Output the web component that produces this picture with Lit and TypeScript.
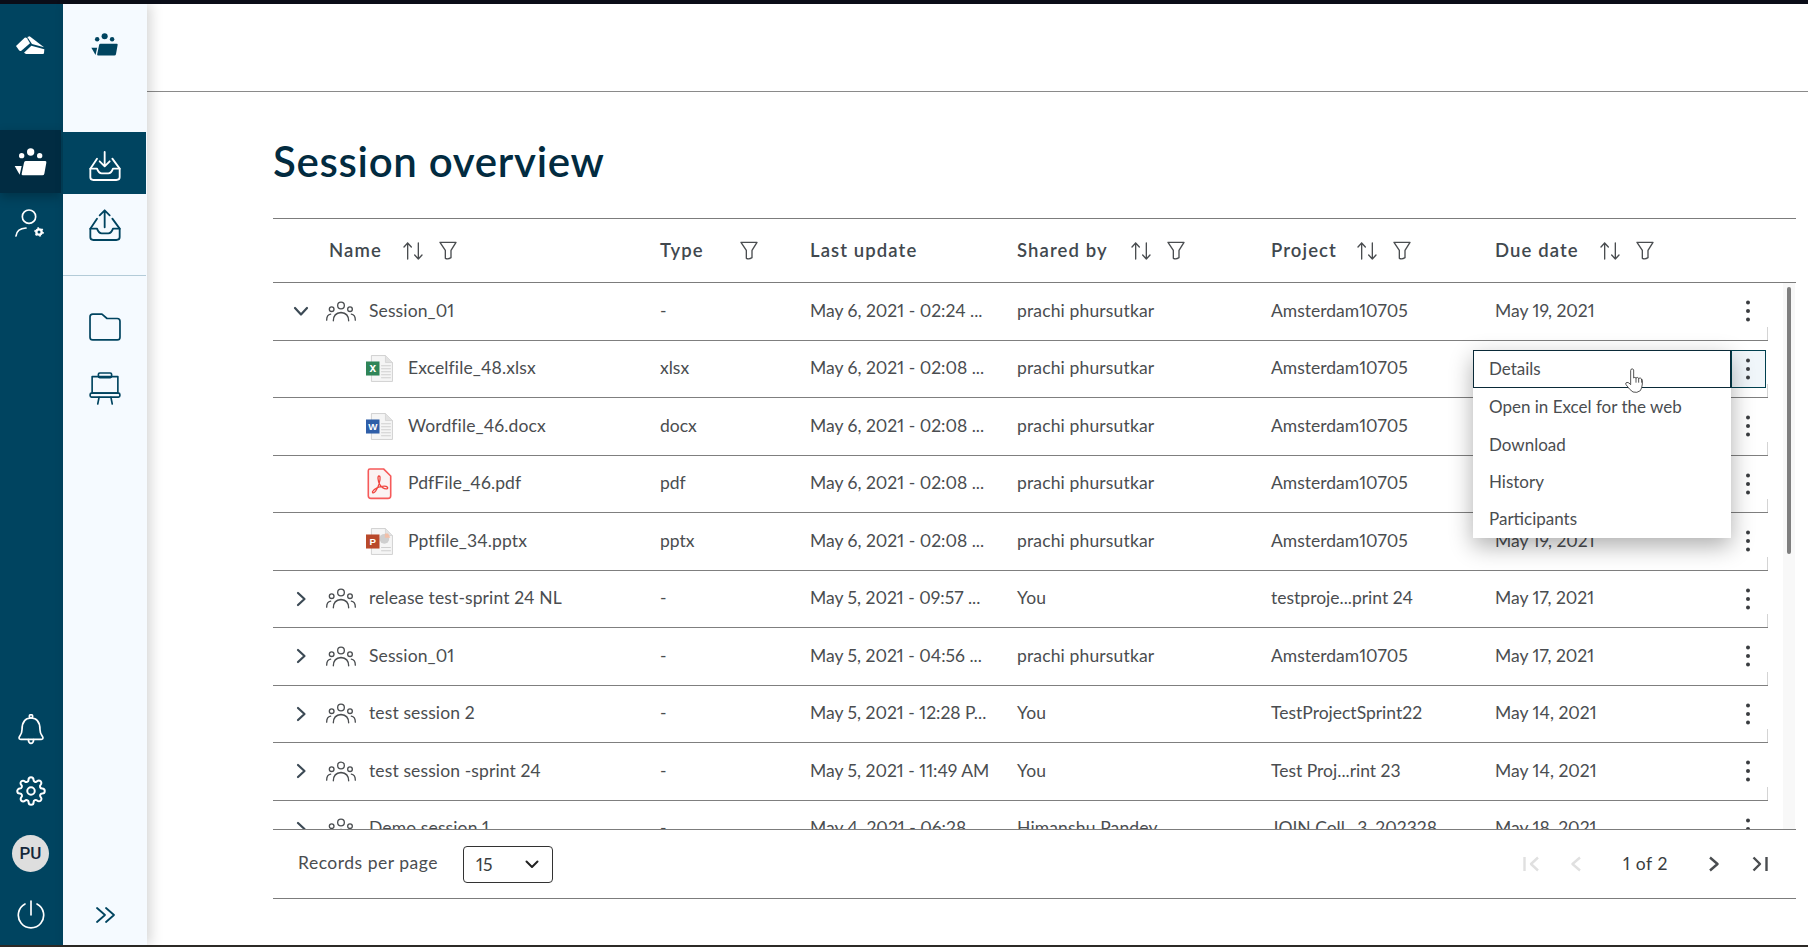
import { LitElement, html, svg, css } from 'lit';
import { customElement } from 'lit/decorators.js';

const teamIcon = (w: number, h: number) => html`<svg class="team" width=${w} height=${h} viewBox="0 0 105 90" fill="currentColor">
  <circle cx="53" cy="15" r="11"/><circle cx="26" cy="26" r="8"/><circle cx="80" cy="26" r="8"/>
  <path d="M5 57H26L20 83Z"/>
  <path d="M38 42H97Q101 42 100 47L94 80Q93 85 88 85H30Q25 85 26 80L33 47Q34 42 38 42Z"/>
</svg>`;

const inboxIcon = (up: boolean) => html`<svg width="36" height="35" viewBox="0 0 108 105" fill="none" stroke="currentColor" stroke-width="5.5" stroke-linecap="round" stroke-linejoin="round">
  ${up
    ? svg`<path d="M53 58V8M38 22L53 7L68 22"/>`
    : svg`<path d="M53 12V53M38 40L53 55L68 40"/>`}
  <path d="M30 32L10 62V88Q10 96 19 96H88Q98 96 98 88V62L76 32"/>
  <path d="M10 62H30Q35 76 44 76H64Q73 76 78 62H98"/>
</svg>`;

const chevron = (dir: 'down' | 'right') => html`<svg class="chev" width="18" height="18" viewBox="0 0 18 18" fill="none" stroke="currentColor" stroke-width="2.2" stroke-linecap="round" stroke-linejoin="round">
  ${dir === 'down' ? svg`<path d="M3 6L9 12.5L15 6"/>` : svg`<path d="M6 3L12.5 9L6 15"/>`}
</svg>`;

const groupIcon = () => html`<svg class="group" width="30" height="21" viewBox="0 0 90 62" fill="none" stroke="currentColor" stroke-width="4" stroke-linecap="round">
  <circle cx="45" cy="13" r="10"/><circle cx="17" cy="24" r="7"/><circle cx="72" cy="24" r="7"/>
  <path d="M22 59Q22 36 45 34Q68 36 68 59"/>
  <path d="M2 57Q2 41 14 39"/><path d="M88 57Q88 41 76 39"/>
</svg>`;

const sortIcon = () => html`<svg width="20" height="18" viewBox="0 0 60 54" fill="none" stroke="currentColor" stroke-width="4" stroke-linecap="round" stroke-linejoin="round">
  <path d="M14 51V3M3 15L14 3L25 15"/><path d="M46 3V51M35 39L46 51L57 39"/>
</svg>`;

const filterIcon = () => html`<svg width="18" height="19" viewBox="0 0 54 57" fill="none" stroke="currentColor" stroke-width="4" stroke-linejoin="round">
  <path d="M3 4H51L36 28V50Q27 56 19 52V28Z"/>
</svg>`;

const kebab = () => html`<svg width="6" height="22" viewBox="0 0 6 22" fill="currentColor">
  <circle cx="3" cy="2.5" r="2"/><circle cx="3" cy="11" r="2"/><circle cx="3" cy="19.5" r="2"/>
</svg>`;

const page = () => svg`<path d="M10 1H36L49 14V49H10Z" fill="#f5f5f5" stroke="#c8c8c8" stroke-width="1.5"/><path d="M36 1V14H49" fill="#e2e2e2" stroke="#c8c8c8" stroke-width="1"/>`;
const lines = () => svg`<path d="M28 20H46M28 25.500H46M28 31H46M28 36.500H46M28 42H46" stroke="#cfcfcf" stroke-width="2"/>`;

const fileIcon = (type: string) => {
  if (type === 'pdf') {
    return html`<svg width="27" height="32" viewBox="0 0 50 60" fill="none">
      <path d="M7 2H33L46 15V52Q46 57 41 57H9Q4 57 4 52V5Q4 2 7 2Z" fill="#fbf3f3" stroke="#f65a5a" stroke-width="3"/>
      <path d="M24 15C21 15 22 24 25 30C27 35 34 40 39 39C42 38 40 34 34 34C26 34 15 38 12 44C11 48 15 47 18 43C22 38 27 24 26 17C26 15 25 15 24 15Z" stroke="#f0453f" stroke-width="2.4"/>
    </svg>`;
  }
  const badge = type === 'xlsx' ? ['#2f8558', 'x'] : type === 'docx' ? ['#2f5ea8', 'W'] : ['#b9492b', 'P'];
  return html`<svg width="27" height="27" viewBox="0 0 50 50">
    ${page()}
    ${type === 'pptx'
      ? svg`<circle cx="34" cy="20" r="9" fill="#cfcfcf"/><path d="M35 10H41L45 18H35Z" fill="#f2bfa8"/><path d="M28 36H46M28 42H46" stroke="#cfcfcf" stroke-width="2"/>`
      : lines()}
    <rect x="0" y="12" width="25" height="26" fill=${badge[0]}/>
    <text x="12.500" y="31" text-anchor="middle" font-family="Liberation Sans, sans-serif" font-weight="700" font-size=${type === 'xlsx' ? 22 : 18} fill="#fff">${badge[1]}</text>
  </svg>`;
};

type Row = {
  name: string;
  type: string;
  updated: string;
  by: string;
  project: string;
  due: string;
  file?: boolean;
  open?: boolean;
};

const rows: Row[] = [
  { name: 'Session_01', type: '-', updated: 'May 6, 2021 - 02:24 ...', by: 'prachi phursutkar', project: 'Amsterdam10705', due: 'May 19, 2021', open: true },
  { name: 'Excelfile_48.xlsx', type: 'xlsx', updated: 'May 6, 2021 - 02:08 ...', by: 'prachi phursutkar', project: 'Amsterdam10705', due: 'May 19, 2021', file: true },
  { name: 'Wordfile_46.docx', type: 'docx', updated: 'May 6, 2021 - 02:08 ...', by: 'prachi phursutkar', project: 'Amsterdam10705', due: 'May 19, 2021', file: true },
  { name: 'PdfFile_46.pdf', type: 'pdf', updated: 'May 6, 2021 - 02:08 ...', by: 'prachi phursutkar', project: 'Amsterdam10705', due: 'May 19, 2021', file: true },
  { name: 'Pptfile_34.pptx', type: 'pptx', updated: 'May 6, 2021 - 02:08 ...', by: 'prachi phursutkar', project: 'Amsterdam10705', due: 'May 19, 2021', file: true },
  { name: 'release test-sprint 24 NL', type: '-', updated: 'May 5, 2021 - 09:57 ...', by: 'You', project: 'testproje...print 24', due: 'May 17, 2021' },
  { name: 'Session_01', type: '-', updated: 'May 5, 2021 - 04:56 ...', by: 'prachi phursutkar', project: 'Amsterdam10705', due: 'May 17, 2021' },
  { name: 'test session 2', type: '-', updated: 'May 5, 2021 - 12:28 P...', by: 'You', project: 'TestProjectSprint22', due: 'May 14, 2021' },
  { name: 'test session -sprint 24', type: '-', updated: 'May 5, 2021 - 11:49 AM', by: 'You', project: 'Test Proj...rint 23', due: 'May 14, 2021' },
  { name: 'Demo session 1', type: '-', updated: 'May 4, 2021 - 06:28 ...', by: 'Himanshu Pandey', project: 'JOIN Coll...3_202328', due: 'May 18, 2021' },
];

// label box width decides where the sort / filter icons start
const columns = [
  { label: 'Name', width: 74, sort: true, filter: true, cls: 'name' },
  { label: 'Type', width: 80, sort: false, filter: true, cls: '' },
  { label: 'Last update', width: 120, sort: false, filter: false, cls: '' },
  { label: 'Shared by', width: 114, sort: true, filter: true, cls: '' },
  { label: 'Project', width: 86, sort: true, filter: true, cls: '' },
  { label: 'Due date', width: 105, sort: true, filter: true, cls: '' },
];

@customElement('app-root')
export class AppRoot extends LitElement {
  static styles = css`
    :host {
      display: flex;
      flex-direction: column;
      height: 100vh;
      overflow: hidden;
      position: relative;
      background: #fff;
      font-family: Lato, 'Noto Sans', sans-serif;
      font-size: 17.5px;
      font-feature-settings: 'pnum';
      color: #4a4d50;
    }
    .topbar { height: 4px; background: #0a0d18; flex: none; }
    .bottombar { height: 2px; background: #2c2a26; flex: none; }
    .frame { flex: 1; display: flex; min-height: 0; }

    .rail {
      width: 63px;
      flex: none;
      background: #004460;
      color: #fff;
      display: flex;
      flex-direction: column;
    }
    .rail-item {
      width: 61px;
      height: 62px;
      display: flex;
      align-items: center;
      justify-content: center;
      flex: none;
    }
    .rail-logo { height: 82px; margin-bottom: 44px; }
    .rail-item.active { background: #012c42; box-shadow: 0 4px 10px rgba(0, 0, 0, 0.25); height: 63px; }
    .rail-bottom { margin-top: auto; }
    .rail-item.last { height: 61px; }
    .avatar {
      width: 37px;
      height: 37px;
      border-radius: 50%;
      background: #dedede;
      color: #14263a;
      font-family: Roboto, sans-serif;
      font-size: 17px;
      font-weight: 500;
      display: flex;
      align-items: center;
      justify-content: center;
    }

    .subnav {
      width: 84px;
      flex: none;
      background: #f5faff;
      color: #004460;
      display: flex;
      flex-direction: column;
      position: relative;
      box-shadow: 4px 0 12px rgba(0, 0, 0, 0.16);
      z-index: 1;
    }
    .sub-item {
      width: 83px;
      height: 62px;
      flex: none;
      display: flex;
      align-items: center;
      justify-content: center;
    }
    .sub-top { height: 80px; margin-bottom: 48px; }
    .sub-item.active { background: #004460; color: #fff; }
    .sub-item.active svg { margin-top: 4px; }
    .divider { height: 1px; width: 83px; background: #b3cbd8; margin: 19px 0 21px; flex: none; }
    .sub-tight { height: 59px; }
    .sub-board { height: 65px; }
    .expand { margin-top: auto; height: 60px; padding-left: 3px; box-sizing: border-box; }

    .main { flex: 1; min-width: 0; display: flex; flex-direction: column; }
    .header { height: 88px; box-sizing: border-box; flex: none; border-bottom: 1px solid #8a8a8a; }
    .content { flex: 1; display: flex; flex-direction: column; padding: 0 12px 0 126px; min-height: 0; }
    h1 {
      margin: 0;
      height: 126px;
      flex: none;
      display: flex;
      align-items: center;
      padding-top: 12px;
      box-sizing: border-box;
      font-size: 42px;
      font-weight: 600;
      letter-spacing: 0.7px;
      color: #022b40;
    }

    .head, .row {
      display: grid;
      grid-template-columns: 387px 150px 207px 254px 224px 235px 38px;
      align-items: center;
    }
    .head {
      height: 65px;
      box-sizing: border-box;
      border-top: 1px solid #7c7c7c;
      border-bottom: 1px solid #7c7c7c;
      font-size: 18.5px;
      font-weight: 600;
      letter-spacing: 1.1px;
      color: #41484e;
      flex: none;
    }
    .hcell { display: flex; align-items: center; }
    .hcell.name { padding-left: 56px; }
    .hcell svg { flex: none; color: #4a4d50; display: block; }
    .hlabel { flex: none; padding-bottom: 2px; }
    .gap-b { margin-left: 16px; }

    .body { height: 546px; flex: none; display: flex; overflow: hidden; }
    .rows { width: 1495px; flex: none; }
    .row {
      height: 57.5px;
      box-sizing: border-box;
      border-bottom: 1px solid #7f7f7f;
      background: linear-gradient(#d4d4d4, #d4d4d4) right bottom / 1px 13px no-repeat;
    }
    .cell { padding-bottom: 2px; }
    .cell.by { letter-spacing: 0.15px; }
    .name-cell { display: flex; align-items: center; }
    .name-cell span { padding-bottom: 2px; letter-spacing: 0.12px; }
    .name-cell .chev { margin-left: 19px; color: #3c4a55; flex: none; }
    .name-cell .group { margin-left: 16px; margin-right: 13px; color: #4a4d50; flex: none; }
    .name-cell.file { padding-left: 93px; }
    .name-cell.file svg { margin-right: 15px; flex: none; }
    .actions { display: flex; justify-content: center; padding-right: 2px; color: #3a3d40; }
    .actions.active span {
      width: 35px;
      height: 38px;
      box-sizing: border-box;
      border: 1px solid #00404f;
      background: #f0f6fa;
      align-items: center;
      justify-content: center;
    }
    .actions span { display: flex; }
    .track { width: 12px; margin-left: 15px; background: #f8f8f8; flex: none; padding: 4px 4px 0; box-sizing: border-box; }
    .thumb { height: 267px; background: #7f7f7f; border-radius: 2px; }

    .footer {
      height: 70px;
      box-sizing: border-box;
      flex: none;
      border-top: 1px solid #7c7c7c;
      border-bottom: 1px solid #7c7c7c;
      display: flex;
      align-items: center;
      padding: 0 28px 0 25px;
    }
    .per-page { width: 140px; flex: none; letter-spacing: 0.5px; padding-bottom: 4px; }
    .select {
      width: 90px;
      height: 37px;
      box-sizing: border-box;
      border: 1px solid #333;
      border-radius: 4px;
      margin-left: 25px;
      padding: 0 13px 0 12px;
      display: flex;
      align-items: center;
      justify-content: space-between;
      color: #3a3d40;
    }
    .select svg { color: #222; }
    .pager { margin-left: auto; display: flex; align-items: center; color: #4a4d50; }
    .pager svg { display: block; flex: none; }
    .off { color: #e0e0e0; }
    .pager .count { margin: 0 41px 0 42px; color: #3a3d40; letter-spacing: 0.6px; padding-bottom: 2px; }
    .pager .p2 { margin-left: 31px; }
    .pager .p3 { margin-left: 33px; }

    .menu {
      position: absolute;
      left: 1473px;
      top: 350px;
      width: 258px;
      height: 188px;
      background: #fff;
      box-shadow: 0 8px 22px rgba(0, 0, 0, 0.32);
      font-size: 17px;
      z-index: 2;
    }
    .menu div {
      height: 37.4px;
      box-sizing: border-box;
      display: flex;
      align-items: center;
      padding: 0 0 0 16px;
    }
    .menu .current { height: 38px; border: 1px solid #0a2a38; padding: 0 0 2px 15px; }
    .hand { position: absolute; left: 1625px; top: 368px; z-index: 3; }
  `;

  private renderRow(r: Row, i: number) {
    return html`<div class="row">
      ${r.file
        ? html`<div class="name-cell file">${fileIcon(r.type)}<span>${r.name}</span></div>`
        : html`<div class="name-cell">${chevron(r.open ? 'down' : 'right')}${groupIcon()}<span>${r.name}</span></div>`}
      <div class="cell">${r.type}</div>
      <div class="cell">${r.updated}</div>
      <div class="cell by">${r.by}</div>
      <div class="cell">${r.project}</div>
      <div class="cell">${r.due}</div>
      <div class="actions ${i === 1 ? 'active' : ''}"><span>${kebab()}</span></div>
    </div>`;
  }

  render() {
    return html`
      <div class="topbar"></div>
      <div class="frame">
        <nav class="rail">
          <div class="rail-item rail-logo">
            <svg width="29" height="18" viewBox="0 0 87 54" fill="#fff">
              <path d="M0 30L26 5Q30 3 33 7L42 22L16 44Q12 46 9 43Z"/>
              <path d="M34 3L41 1L84 34L48 24Z"/>
              <path d="M24 50L46 29L85 40L84 52Q84 54 80 54H30Z"/>
            </svg>
          </div>
          <div class="rail-item active">${teamIcon(35, 30)}</div>
          <div class="rail-item">
            <svg width="31" height="31" viewBox="0 0 93 93" fill="none" stroke="#fff" stroke-width="5" stroke-linecap="round">
              <circle cx="42" cy="23" r="20"/>
              <path d="M3 81Q5 59 33 57"/>
              <circle cx="72" cy="69" r="8" stroke-width="7"/>
              <circle cx="72" cy="69" r="12" stroke-width="5" stroke-linecap="butt" stroke-dasharray="5 7.57"/>
            </svg>
          </div>
          <div class="rail-bottom">
            <div class="rail-item">
              <svg width="26" height="31" viewBox="0 0 78 93" fill="none" stroke="#fff" stroke-width="5" stroke-linecap="round" stroke-linejoin="round">
                <path d="M39 12C17 12 12 32 12 47C12 62 3 66 3 72Q3 76 8 76H70Q75 76 75 72C75 66 66 62 66 47C66 32 61 12 39 12Z"/>
                <circle cx="39" cy="7" r="5"/>
                <path d="M31 77Q32 88 39 88Q46 88 47 77"/>
              </svg>
            </div>
            <div class="rail-item">
              <svg width="30" height="30" viewBox="0 0 24 24" fill="none" stroke="#fff" stroke-width="1.6" stroke-linecap="round" stroke-linejoin="round">
                <circle cx="12" cy="12" r="3"/>
                <path d="M19.4 15a1.65 1.65 0 0 0 .33 1.82l.06.06a2 2 0 0 1 0 2.83 2 2 0 0 1-2.83 0l-.06-.06a1.65 1.65 0 0 0-1.82-.33 1.65 1.65 0 0 0-1 1.51V21a2 2 0 0 1-2 2 2 2 0 0 1-2-2v-.09A1.65 1.65 0 0 0 9 19.4a1.65 1.65 0 0 0-1.82.33l-.06.06a2 2 0 0 1-2.83 0 2 2 0 0 1 0-2.83l.06-.06a1.65 1.65 0 0 0 .33-1.82 1.65 1.65 0 0 0-1.51-1H3a2 2 0 0 1-2-2 2 2 0 0 1 2-2h.09A1.65 1.65 0 0 0 4.6 9a1.65 1.65 0 0 0-.33-1.82l-.06-.06a2 2 0 0 1 0-2.83 2 2 0 0 1 2.83 0l.06.06a1.65 1.65 0 0 0 1.82.33H9a1.65 1.65 0 0 0 1-1.51V3a2 2 0 0 1 2-2 2 2 0 0 1 2 2v.09a1.65 1.65 0 0 0 1 1.51 1.65 1.65 0 0 0 1.82-.33l.06-.06a2 2 0 0 1 2.83 0 2 2 0 0 1 0 2.83l-.06.06a1.65 1.65 0 0 0-.33 1.82V9a1.65 1.65 0 0 0 1.51 1H21a2 2 0 0 1 2 2 2 2 0 0 1-2 2h-.09a1.65 1.65 0 0 0-1.51 1z"/>
              </svg>
            </div>
            <div class="rail-item"><div class="avatar">PU</div></div>
            <div class="rail-item last">
              <svg width="28" height="29" viewBox="0 0 84 87" fill="none" stroke="#fff" stroke-width="5" stroke-linecap="round">
                <path d="M42 3V45"/>
                <path d="M24 12A38 38 0 1 0 60 12"/>
              </svg>
            </div>
          </div>
        </nav>
        <nav class="subnav">
          <div class="sub-item sub-top">${teamIcon(29, 25)}</div>
          <div class="sub-item active">${inboxIcon(false)}</div>
          <div class="sub-item">${inboxIcon(true)}</div>
          <div class="divider"></div>
          <div class="sub-item sub-tight">
            <svg width="32" height="28" viewBox="0 0 94 82" fill="none" stroke="currentColor" stroke-width="5" stroke-linejoin="round">
              <path d="M3 11Q3 3 11 3H38L53 16H83Q91 16 91 24V71Q91 79 83 79H11Q3 79 3 71Z"/>
            </svg>
          </div>
          <div class="sub-item sub-board">
            <svg width="32" height="33" viewBox="0 0 96 100" fill="none" stroke="currentColor" stroke-width="5" stroke-linecap="round" stroke-linejoin="round">
              <rect x="9" y="14" width="78" height="50"/>
              <rect x="28" y="3" width="40" height="14" rx="4"/>
              <rect x="3" y="64" width="90" height="12" rx="4"/>
              <path d="M30 77L26 97M66 77L70 97"/>
            </svg>
          </div>
          <div class="sub-item expand">
            <svg width="22" height="18" viewBox="0 0 66 54" fill="none" stroke="currentColor" stroke-width="5.5" stroke-linecap="round" stroke-linejoin="round">
              <path d="M6 6L30 27L6 48"/><path d="M33 6L57 27L33 48"/>
            </svg>
          </div>
        </nav>
        <main class="main">
          <div class="header"></div>
          <div class="content">
            <h1>Session overview</h1>
            <div class="head">
              ${columns.map(
                (c) => html`<div class="hcell ${c.cls}">
                  <span class="hlabel" style="width:${c.width}px">${c.label}</span>
                  ${c.sort ? sortIcon() : ''}
                  ${c.filter ? html`<span class=${c.sort ? 'gap-b' : ''} style="display:flex">${filterIcon()}</span>` : ''}
                </div>`
              )}
              <div></div>
            </div>
            <div class="body">
              <div class="rows">${rows.map((r, i) => this.renderRow(r, i))}</div>
              <div class="track"><div class="thumb"></div></div>
            </div>
            <div class="footer">
              <span class="per-page">Records per page</span>
              <div class="select">
                <span>15</span>
                <svg width="14" height="9" viewBox="0 0 14 9" fill="none" stroke="currentColor" stroke-width="2" stroke-linecap="round" stroke-linejoin="round"><path d="M1.5 1.5L7 7L12.5 1.5"/></svg>
              </div>
              <div class="pager">
                <svg class="off" width="17" height="16" viewBox="0 0 17 16" fill="none" stroke="currentColor" stroke-width="2.4" stroke-linejoin="round"><path d="M1.5 1V15"/><path d="M15 1.5L8 8L15 14.5"/></svg>
                <svg class="off p2" width="10" height="16" viewBox="0 0 10 16" fill="none" stroke="currentColor" stroke-width="2.4" stroke-linejoin="round"><path d="M9 1.500L1.500 8L9 14.500"/></svg>
                <span class="count">1 of 2</span>
                <svg width="10" height="16" viewBox="0 0 10 16" fill="none" stroke="currentColor" stroke-width="2.4" stroke-linejoin="round"><path d="M1 1.500L8.500 8L1 14.500"/></svg>
                <svg class="p3" width="16" height="16" viewBox="0 0 16 16" fill="none" stroke="currentColor" stroke-width="2.4" stroke-linejoin="round"><path d="M1.5 1.5L8 8L1.5 14.5"/><path d="M14.5 1V15"/></svg>
              </div>
            </div>
          </div>
        </main>
      </div>
      <div class="bottombar"></div>
      <div class="menu">
        <div class="current">Details</div>
        <div>Open in Excel for the web</div>
        <div>Download</div>
        <div>History</div>
        <div>Participants</div>
      </div>
      <svg class="hand" width="20" height="26" viewBox="0 0 60 78" fill="#fff" stroke="#333" stroke-width="2.5" stroke-linejoin="round">
        <path d="M18 4Q24 0 26 6V30Q29 26 33 30Q37 26 41 31Q46 28 50 33Q53 36 52 48Q51 60 46 68Q36 76 24 72Q14 66 3 50Q0 44 6 43Q12 43 17 50V8Q17 5 18 4Z"/>
        <path d="M33 30V44M41 31V44M50 33V44" fill="none"/>
      </svg>
    `;
  }
}
